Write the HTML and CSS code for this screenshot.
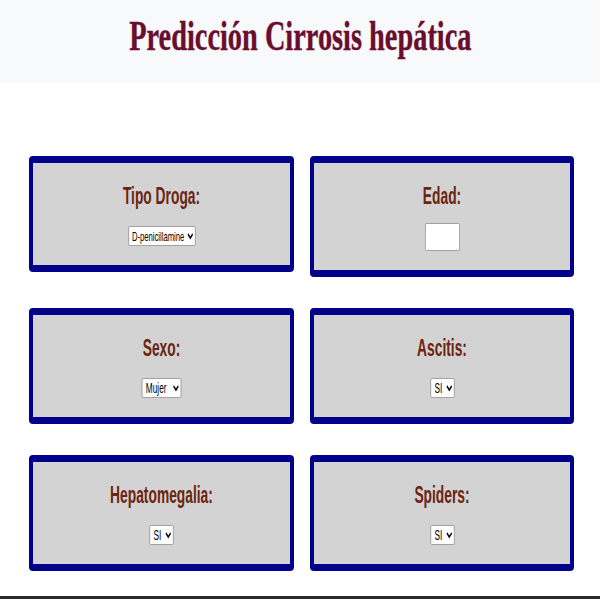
FILE: index.html
```html
<!DOCTYPE html>
<html lang="es">
<head>
<meta charset="utf-8">
<title>Predicción Cirrosis hepática</title>
<link rel="stylesheet" href="styles.css">
</head>
<body>
<header class="header">
  <h1 class="title">Predicción Cirrosis hepática</h1>
</header>
<main class="grid">
  <section class="card">
    <h2 class="label">Tipo Droga:</h2>
    <div class="control">
      <select class="sel sel-wide"><option>D-penicillamine</option><option>Placebo</option></select>
    </div>
  </section>
  <section class="card">
    <h2 class="label">Edad:</h2>
    <div class="control control-input">
      <input class="num" type="text">
    </div>
  </section>
  <section class="card">
    <h2 class="label">Sexo:</h2>
    <div class="control">
      <select class="sel sel-mid"><option>Mujer</option><option>Hombre</option></select>
    </div>
  </section>
  <section class="card">
    <h2 class="label">Ascitis:</h2>
    <div class="control">
      <select class="sel sel-small"><option>SI</option><option>NO</option></select>
    </div>
  </section>
  <section class="card">
    <h2 class="label">Hepatomegalia:</h2>
    <div class="control">
      <select class="sel sel-small"><option>SI</option><option>NO</option></select>
    </div>
  </section>
  <section class="card">
    <h2 class="label">Spiders:</h2>
    <div class="control">
      <select class="sel sel-small"><option>SI</option><option>NO</option></select>
    </div>
  </section>
</main>
<footer class="bottom-bar"></footer>
</body>
</html>
```
FILE: styles.css
```css
html, body {
  margin: 0;
  padding: 0;
  background: #ffffff;
  overflow: hidden;
}

.header {
  background: #f8f9fa;
  height: 83px;
  box-sizing: border-box;
  padding-top: 15px;
}

.title {
  margin: 0;
  font-family: "Liberation Serif", "DejaVu Serif", serif;
  font-weight: bold;
  font-size: 42px;
  line-height: 42px;
  color: #6b0e2e;
  text-align: center;
  transform: scaleX(0.675);
  transform-origin: 301px 0;
  -webkit-text-stroke: 0.4px #6b0e2e;
}

.grid {
  display: grid;
  grid-template-columns: 265px 264px;
  column-gap: 16px;
  row-gap: 31px;
  align-items: start;
  padding: 73px 0 25px 29px;
}

.card {
  background: #d3d3d3;
  border-style: solid;
  border-color: #00008b;
  border-width: 7px 4px;
  border-radius: 4px;
  padding: 20px 0 19px;
  text-align: center;
}

.label {
  margin: 0;
  font-family: "Liberation Sans", Arial, sans-serif;
  font-weight: bold;
  font-size: 23px;
  line-height: 27px;
  color: #6b2410;
  transform: scaleX(0.6);
}

.control {
  margin-top: 16px;
  height: 20px;
  display: flex;
  justify-content: center;
}

.control-input {
  margin-top: 13px;
  height: 28px;
}

.sel {
  height: 20px;
  box-sizing: border-box;
  font-family: "Liberation Sans", Arial, sans-serif;
  font-size: 14px;
  color: #000;
  background: #fff;
  border: 1px solid #8f8f8f;
  border-radius: 2px;
  padding: 0 0 0 2px;
  margin: 0;
  transform: scaleX(0.59);
}

.sel-wide { width: 114px; flex: 0 0 114px; font-size: 13px; padding-left: 1px; }
.sel-mid { width: 67px; flex: 0 0 67px; }
.sel-small { width: 41px; flex: 0 0 41px; }

.num {
  width: 59px;
  height: 28px;
  box-sizing: border-box;
  margin: 0;
  background: #fff;
  border: 1px solid #8f8f8f;
  border-radius: 2px;
  transform: scaleX(0.59);
}

.bottom-bar {
  height: 3px;
  background: #2b2b2b;
}
```
